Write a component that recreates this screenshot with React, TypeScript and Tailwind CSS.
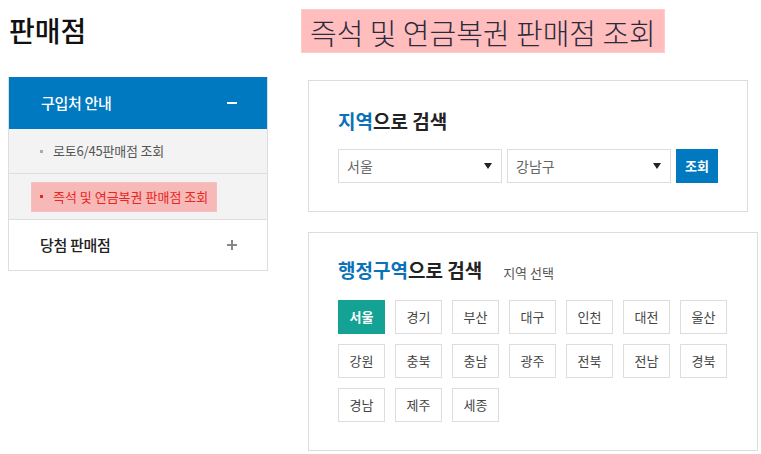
import React from "react";

const font = { fontFamily: '"Noto Sans CJK KR", "Noto Sans", sans-serif' };

const regions = [
  "서울", "경기", "부산", "대구", "인천", "대전", "울산",
  "강원", "충북", "충남", "광주", "전북", "전남", "경북",
  "경남", "제주", "세종",
];

function Select({ value }: { value: string }) {
  return (
    <div className="flex h-[34px] w-[164px] items-center justify-between border border-[#dddddd] bg-white pl-[8px] pr-[9px] text-[14px] text-[#666666]">
      <span>{value}</span>
      <svg width="8" height="6" viewBox="0 0 8 6">
        <path d="M0 0 H8 L4 6 Z" fill="#222" />
      </svg>
    </div>
  );
}

export default function App() {
  return (
    <div className="flex min-h-[454px] w-[761px] items-start overflow-hidden bg-white" style={font}>
      {/* left column */}
      <div className="ml-[8px] w-[260px] shrink-0">
        <h1 className="ml-[1px] mt-[10px] h-[40px] text-[28px] font-medium leading-[40px] text-[#111111]">
          판매점
        </h1>
        <div className="mt-[27px] border border-[#dddddd] border-t-0">
          <div className="flex h-[52px] items-center justify-between bg-[#0079c1] pl-[32px] pr-[30px] text-[15px] font-medium tracking-[-0.3px] text-white">
            <span>구입처 안내</span>
            <span className="block h-[2px] w-[10px] bg-white" />
          </div>
          <div className="bg-[#f3f3f3]">
            <div className="flex h-[45px] items-center border-b border-[#dddddd] pl-[30px] text-[13px] tracking-[-0.2px] text-[#555555]">
              <span className="ml-[1px] mr-[10px] block h-[3px] w-[3px] bg-[#aaaaaa]" />
              <span>로토6/45판매점 조회</span>
            </div>
            <div className="flex h-[46px] items-center border-b border-[#dddddd] pl-[22px]">
              <div className="flex h-[30px] w-[186px] items-center border border-[#f5c0c0] bg-[#f7b8b8] pl-[8px] text-[13px] text-[#e8261c]">
                <span className="mr-[10px] block h-[3px] w-[3px] bg-[#e8261c]" />
                <span>즉석 및 연금복권 판매점 조회</span>
              </div>
            </div>
          </div>
          <div className="flex h-[50px] items-center justify-between pl-[31px] pr-[30px] text-[15px] font-medium tracking-[-0.3px] text-[#222222]">
            <span>당첨 판매점</span>
            <span className="relative block h-[10px] w-[10px]">
              <span className="absolute left-0 top-[4px] block h-[2px] w-[10px] bg-[#888888]" />
              <span className="absolute left-[4px] top-0 block h-[10px] w-[2px] bg-[#888888]" />
            </span>
          </div>
        </div>
      </div>

      {/* right column */}
      <div className="ml-[33px] flex flex-col items-start">
        <div className="mt-[9px] flex h-[44px] items-center border border-[#ffcccc] bg-[#ffbdbd] px-[8px] pt-[2px] text-[29px] font-light leading-none text-[#2a2a3a]">
          즉석 및 연금복권 판매점 조회
        </div>

        <div className="ml-[7px] mt-[27px] h-[132px] w-[440px] border border-[#dddddd] pl-[29px] pt-[26px]">
          <h2 className="h-[27px] text-[19px] font-bold leading-[27px] text-[#222222]">
            <span className="text-[#0a72b8]">지역</span>으로 검색
          </h2>
          <div className="mt-[15px] flex gap-[5px]">
            <Select value="서울" />
            <Select value="강남구" />
            <button className="h-[34px] w-[42px] bg-[#0079c1] text-[13px] font-bold text-white">조회</button>
          </div>
        </div>

        <div className="ml-[7px] mt-[20px] h-[219px] w-[450px] border border-[#dddddd] pl-[29px] pt-[23px]">
          <div className="flex items-baseline">
            <h2 className="h-[27px] text-[19px] font-bold leading-[27px] text-[#222222]">
              <span className="text-[#0a72b8]">행정구역</span>으로 검색
            </h2>
            <span className="ml-[21px] text-[13px] text-[#555555]">지역 선택</span>
          </div>
          <div className="mt-[17px] grid w-[389px] grid-cols-[repeat(7,47px)] gap-[10px]">
            {regions.map((r, i) => (
              <div
                key={r}
                className={
                  i === 0
                    ? "flex h-[34px] items-center justify-center bg-[#13a293] text-[13px] font-bold text-white"
                    : "flex h-[34px] items-center justify-center border border-[#dddddd] bg-white text-[13px] text-[#444444]"
                }
              >
                {r}
              </div>
            ))}
          </div>
        </div>
      </div>
    </div>
  );
}
